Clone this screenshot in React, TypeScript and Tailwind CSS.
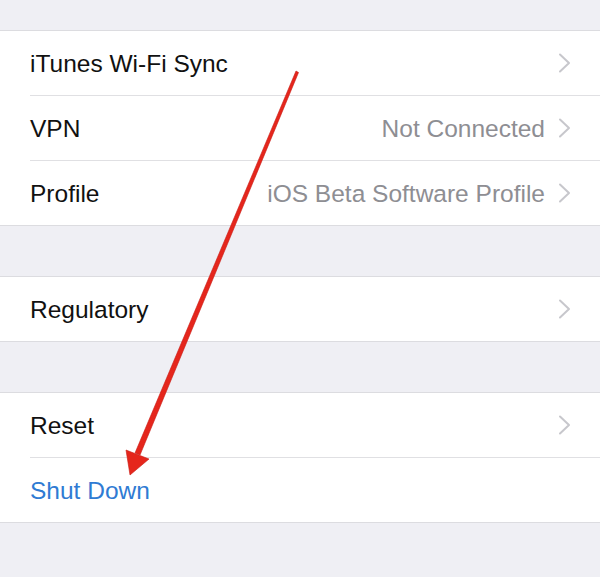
type Row = { label: string; detail?: string; chevron?: boolean; blue?: boolean };

const sections: Row[][] = [
  [
    { label: 'iTunes Wi-Fi Sync', chevron: true },
    { label: 'VPN', detail: 'Not Connected', chevron: true },
    { label: 'Profile', detail: 'iOS Beta Software Profile', chevron: true },
  ],
  [{ label: 'Regulatory', chevron: true }],
  [{ label: 'Reset', chevron: true }, { label: 'Shut Down', blue: true }],
];

function Chevron() {
  return (
    <svg width="13" height="20" viewBox="0 0 13 20" className="shrink-0">
      <polyline points="2,1.5 11,10 2,18.5" fill="none" stroke="#c7c7cc" strokeWidth="2" strokeLinecap="round" strokeLinejoin="round" />
    </svg>
  );
}

function Section({ rows, first }: { rows: Row[]; first?: boolean }) {
  return (
    <div className={`bg-white border-y border-[#dcdce0] ${first ? 'mt-[30px]' : 'mt-[50px]'}`}>
      {rows.map((row, i) => {
        const last = i === rows.length - 1;
        return (
          <div key={row.label} className="pl-[30px]">
            <div
              className={`flex items-center pr-[29px] ${last ? 'h-[64px]' : 'h-[65px] border-b border-[#e0e0e3]'}`}
            >
              <span className={`pt-[3px] text-[24.5px] ${row.blue ? 'text-[#2f7bd3]' : 'text-[#111]'}`}>
                {row.label}
              </span>
              <span className="flex-1" />
              {row.detail && <span className="pt-[3px] text-[24.5px] text-[#8e8e93] mr-[13px]">{row.detail}</span>}
              {row.chevron && <Chevron />}
            </div>
          </div>
        );
      })}
    </div>
  );
}

export default function App() {
  return (
    <div
      className="relative w-[600px] h-[577px] bg-[#efeff4] overflow-hidden"
      style={{ fontFamily: '"Liberation Sans", Arial, sans-serif' }}
    >
      {sections.map((rows, i) => (
        <Section key={i} rows={rows} first={i === 0} />
      ))}

      {/* red arrow annotation */}
      <svg className="absolute inset-0" width="600" height="577" viewBox="0 0 600 577">
        <polygon points="296,71 298.5,72.5 140,455 135,453" fill="#e5261c" stroke="#c81a12" strokeWidth="0.6" />
        <polygon points="126,450 149,459 130,475" fill="#e5261c" stroke="#c81a12" strokeWidth="0.6" strokeLinejoin="round" />
      </svg>
    </div>
  );
}
